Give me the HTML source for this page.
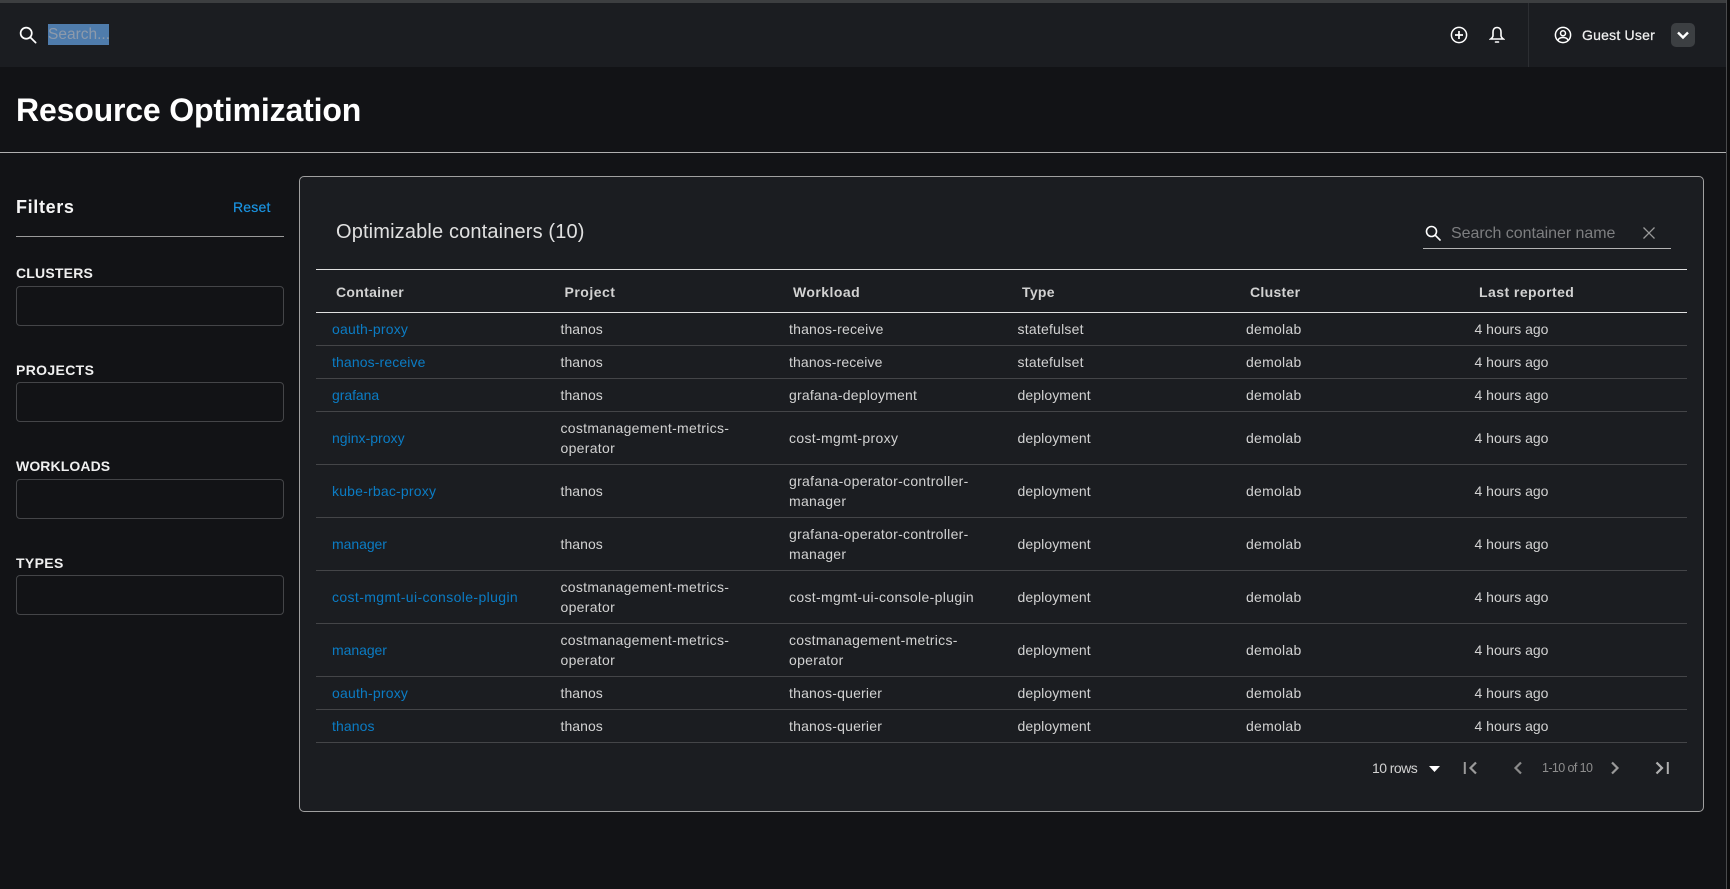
<!DOCTYPE html>
<html lang="en"><head><meta charset="utf-8"><title>Resource Optimization</title>
<style>
*{box-sizing:border-box}
html,body{margin:0;padding:0;width:1730px;height:889px;overflow:hidden;background:#121316;font-family:"Liberation Sans",sans-serif;color:#d2d2d2}
.a{position:absolute;white-space:nowrap}
.line{position:absolute;height:1px}
.box{position:absolute;left:16px;width:268px;height:40px;border:1px solid #444548;border-radius:4px}
.lab{position:absolute;left:16px;font-size:14px;line-height:18px;font-weight:700;color:#f0f0f0;letter-spacing:.2px}
table{position:absolute;left:316px;top:313px;width:1371px;border-collapse:separate;border-spacing:0;table-layout:fixed;font-size:14px;line-height:20px;letter-spacing:.2px;color:#d2d2d2}
td{padding:0 0 0 16px;border-bottom:1px solid #444548;vertical-align:middle;white-space:nowrap}
tr.s td{height:33px}tr.d td{height:53px}
td a{color:#0b7cc4;text-decoration:none}
.th{position:absolute;top:283px;font-size:14px;line-height:18px;font-weight:700;color:#d2d2d2;letter-spacing:.3px}
.t{letter-spacing:.05px}.h{letter-spacing:0}.dp{letter-spacing:.09px}.sf{letter-spacing:.22px}.dm{letter-spacing:.26px}
.lg{letter-spacing:.3px}.cm{letter-spacing:.34px}.m{letter-spacing:-.05px}
</style></head><body>
<div class="a" style="left:0;top:0;width:1727px;height:3px;background:#3c3e40"></div>
<div class="a" style="left:0;top:3px;width:1727px;height:64px;background:#1b1d21"></div>
<div class="a" style="left:1528px;top:3px;width:1px;height:64px;background:#2c2e32"></div>
<div class="a" style="left:1726px;top:0;width:1px;height:889px;background:#4a4b4d"></div>
<div class="a" style="left:1727px;top:0;width:3px;height:889px;background:#0c0c0d"></div>

<svg class="a" style="left:19px;top:26px" width="18" height="18" viewBox="0 0 20 20" fill="none" stroke="#fff" stroke-width="1.900"><circle cx="8" cy="8" r="6.200"/><path d="M12.600 12.600 18.500 18.500" stroke-linecap="round"/></svg>
<div class="a" style="left:48px;top:24px;width:61px;height:21px;background:#4f7cac;color:#8d9aab;font-size:15.500px;line-height:21px">Search...</div>

<svg class="a" style="left:1450px;top:26px" width="18" height="18" viewBox="0 0 18 18" fill="none" stroke="#fff" stroke-width="1.500"><circle cx="9" cy="9" r="7.600"/><path d="M9 5v8M5 9h8" stroke-width="1.700"/></svg>
<svg class="a" style="left:1489px;top:26px" width="16" height="18" viewBox="0 0 16 18" fill="none" stroke="#fff" stroke-width="1.600"><path d="M8 1.500c-2.600 0-4 1.800-4 4.500v3.500c0 1.500-1 2.500-2.300 3.500h12.600c-1.300-1-2.300-2-2.300-3.500V6c0-2.700-1.400-4.500-4-4.500z"/><path d="M6.500 16h3" stroke-linecap="round"/></svg>
<svg class="a" style="left:1554px;top:26px" width="18" height="18" viewBox="0 0 18 18" fill="none" stroke="#fff" stroke-width="1.500"><circle cx="9" cy="9" r="7.600"/><circle cx="9" cy="7.300" r="2.500"/><path d="M3.800 14.500c.8-2.300 2.700-3 5.200-3s4.400.7 5.200 3"/></svg>
<div class="a" style="left:1582px;top:26px;font-size:14px;line-height:18px;color:#f0f0f0;letter-spacing:.22px;-webkit-text-stroke:.25px #f0f0f0">Guest User</div>
<div class="a" style="left:1671px;top:23px;width:24px;height:24px;background:#3c3f42;border-radius:5px"></div>
<svg class="a" style="left:1671px;top:23px" width="24" height="24" viewBox="0 0 24 24" fill="none" stroke="#fff" stroke-width="2.400"><path d="M7 9.500l5 5 5-5"/></svg>

<div class="a" style="left:16px;top:90px;font-size:32px;line-height:40px;font-weight:700;color:#fff;letter-spacing:-.16px">Resource Optimization</div>
<div class="line" style="left:0;top:152px;width:1726px;background:#b0b0b0"></div>

<div class="a" style="left:16px;top:195px;font-size:18px;line-height:24px;font-weight:700;color:#f5f5f5;letter-spacing:.65px">Filters</div>
<div class="a" style="left:233px;top:198px;font-size:14px;line-height:18px;color:#1a94e2;letter-spacing:.2px;-webkit-text-stroke:.2px #1a94e2">Reset</div>
<div class="line" style="left:16px;top:236px;width:268px;background:#9a9a9a"></div>

<div class="lab" style="top:264px">CLUSTERS</div><div class="box" style="top:286px"></div>
<div class="lab" style="top:361px;letter-spacing:.35px">PROJECTS</div><div class="box" style="top:382px"></div>
<div class="lab" style="top:457px;letter-spacing:.1px">WORKLOADS</div><div class="box" style="top:479px"></div>
<div class="lab" style="top:554px;letter-spacing:.35px">TYPES</div><div class="box" style="top:575px"></div>

<div class="a" style="left:299px;top:176px;width:1405px;height:636px;background:#1b1d21;border:1px solid #a0a0a0;border-radius:5px"></div>
<div class="a" style="left:336px;top:219px;font-size:20px;line-height:26px;color:#e0e0e0;letter-spacing:.15px">Optimizable containers (10)</div>

<svg class="a" style="left:1425px;top:225px" width="16" height="16" viewBox="0 0 16 16" fill="none" stroke="#fff" stroke-width="1.600"><circle cx="6.500" cy="6.500" r="5"/><path d="M10.200 10.200 15 15" stroke-linecap="round"/></svg>
<div class="a" style="left:1451px;top:224px;font-size:16px;line-height:20px;color:#7d7e80;letter-spacing:-.05px">Search container name</div>
<svg class="a" style="left:1642px;top:226px" width="14" height="14" viewBox="0 0 14 14" fill="none" stroke="#9a9a9a" stroke-width="1.300"><path d="M1.500 1.500l11 11M12.500 1.500l-11 11"/></svg>
<div class="line" style="left:1423px;top:248px;width:248px;background:#b4b4b4"></div>

<div class="line" style="left:316px;top:269px;width:1371px;background:#e0e0e0"></div>
<div class="th" style="left:336px">Container</div>
<div class="th" style="left:564.500px;letter-spacing:.5px">Project</div>
<div class="th" style="left:793px;letter-spacing:.45px">Workload</div>
<div class="th" style="left:1022px">Type</div>
<div class="th" style="left:1250px">Cluster</div>
<div class="th" style="left:1479px;letter-spacing:.45px">Last reported</div>
<div class="line" style="left:316px;top:312px;width:1371px;background:#e0e0e0"></div>

<table>
<tr class="s"><td><a>oauth-proxy</a></td><td class="t">thanos</td><td>thanos-receive</td><td class="sf">statefulset</td><td class="dm">demolab</td><td class="h">4 hours ago</td></tr>
<tr class="s"><td><a style="letter-spacing:.12px">thanos-receive</a></td><td class="t">thanos</td><td style="letter-spacing:.12px">thanos-receive</td><td class="sf">statefulset</td><td class="dm">demolab</td><td class="h">4 hours ago</td></tr>
<tr class="s"><td><a class="m">grafana</a></td><td class="t">thanos</td><td>grafana-deployment</td><td class="dp">deployment</td><td class="dm">demolab</td><td class="h">4 hours ago</td></tr>
<tr class="d"><td><a style="letter-spacing:.02px">nginx-proxy</a></td><td class="lg">costmanagement-metrics-<br>operator</td><td class="cm">cost-mgmt-proxy</td><td class="dp">deployment</td><td class="dm">demolab</td><td class="h">4 hours ago</td></tr>
<tr class="d"><td><a>kube-rbac-proxy</a></td><td class="t">thanos</td><td class="lg">grafana-operator-controller-<br>manager</td><td class="dp">deployment</td><td class="dm">demolab</td><td class="h">4 hours ago</td></tr>
<tr class="d"><td><a class="m">manager</a></td><td class="t">thanos</td><td class="lg">grafana-operator-controller-<br>manager</td><td class="dp">deployment</td><td class="dm">demolab</td><td class="h">4 hours ago</td></tr>
<tr class="d"><td><a style="letter-spacing:.38px">cost-mgmt-ui-console-plugin</a></td><td class="lg">costmanagement-metrics-<br>operator</td><td class="cm">cost-mgmt-ui-console-plugin</td><td class="dp">deployment</td><td class="dm">demolab</td><td class="h">4 hours ago</td></tr>
<tr class="d"><td><a class="m">manager</a></td><td class="lg">costmanagement-metrics-<br>operator</td><td class="lg">costmanagement-metrics-<br>operator</td><td class="dp">deployment</td><td class="dm">demolab</td><td class="h">4 hours ago</td></tr>
<tr class="s"><td><a>oauth-proxy</a></td><td class="t">thanos</td><td>thanos-querier</td><td class="dp">deployment</td><td class="dm">demolab</td><td class="h">4 hours ago</td></tr>
<tr class="s"><td><a style="letter-spacing:.1px">thanos</a></td><td class="t">thanos</td><td>thanos-querier</td><td class="dp">deployment</td><td class="dm">demolab</td><td class="h">4 hours ago</td></tr>
</table>

<div class="a" style="left:1372px;top:759px;font-size:14px;line-height:18px;color:#d2d2d2;letter-spacing:-.55px">10 rows</div>
<svg class="a" style="left:1429px;top:766px" width="11" height="6" viewBox="0 0 11 6"><path d="M0 0h11L5.500 6z" fill="#fff"/></svg>
<svg class="a" style="left:1463px;top:761px" width="16" height="14" viewBox="0 0 16 14" fill="none" stroke="#9a9a9a" stroke-width="2.200"><path d="M1.800 1v12" stroke-width="2"/><path d="M13 1.500 7.500 7l5.500 5.500"/></svg>
<svg class="a" style="left:1513px;top:761px" width="10" height="14" viewBox="0 0 10 14" fill="none" stroke="#8a8a8a" stroke-width="2.200"><path d="M8 1.500 2.500 7 8 12.500"/></svg>
<div class="a" style="left:1542px;top:759px;font-size:12.500px;line-height:18px;color:#8e8e8e;letter-spacing:-.6px">1-10 of 10</div>
<svg class="a" style="left:1610px;top:761px" width="10" height="14" viewBox="0 0 10 14" fill="none" stroke="#9a9a9a" stroke-width="2.200"><path d="M2 1.500 7.500 7 2 12.500"/></svg>
<svg class="a" style="left:1654px;top:761px" width="16" height="14" viewBox="0 0 16 14" fill="none" stroke="#b0b0b0" stroke-width="2.200"><path d="M2.500 1.500 8 7l-5.500 5.500"/><path d="M13.800 1v12" stroke-width="2"/></svg>
</body></html>
